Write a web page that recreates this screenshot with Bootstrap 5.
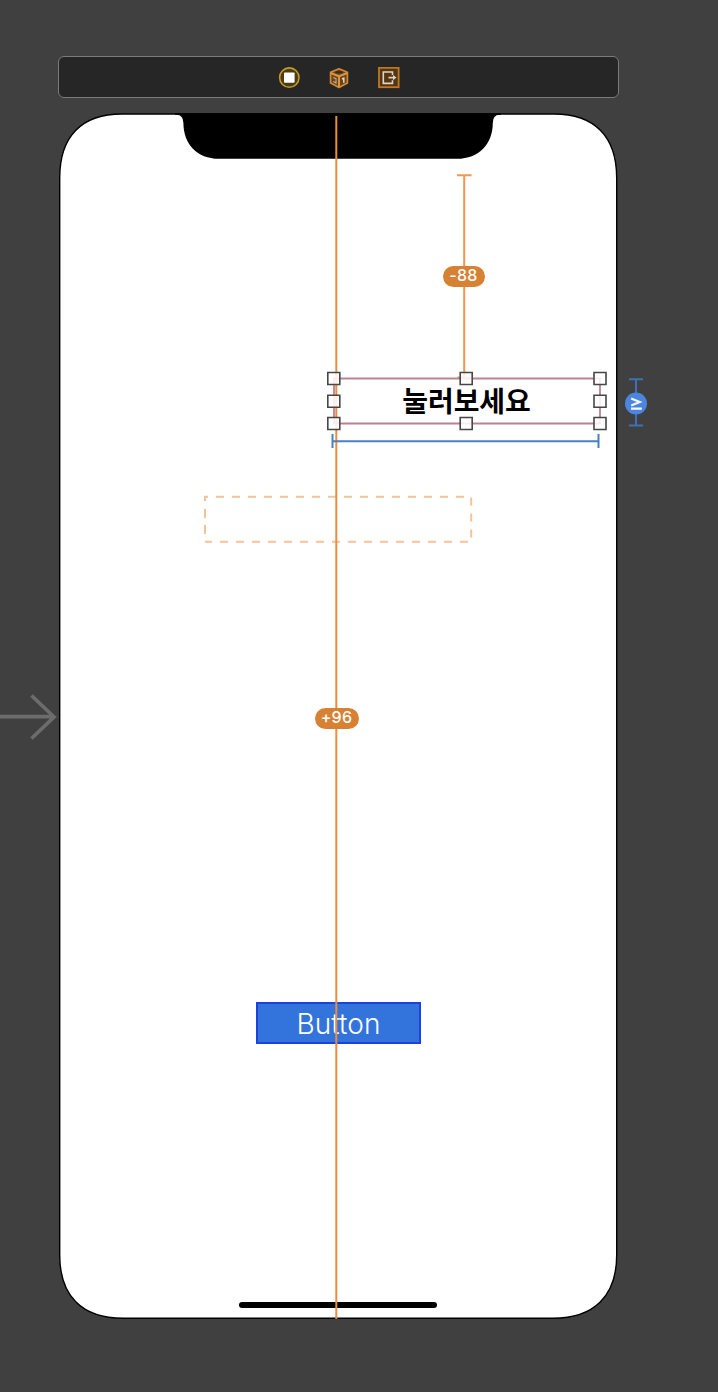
<!DOCTYPE html>
<html lang="ko">
<head>
<meta charset="utf-8">
<meta name="viewport" content="width=device-width, initial-scale=1">
<title>Storyboard</title>
<link href="https://cdn.jsdelivr.net/npm/bootstrap@5.3.0/dist/css/bootstrap.min.css" rel="stylesheet">
<style>
body{background:#404040;font-family:Inter,"Noto Sans CJK KR",sans-serif;height:1392px;overflow:hidden}
.storyboard{width:718px;height:1392px;padding:56px 100px 0 58px}
.scene-dock{height:42px;width:561px;padding-top:2px;background:#262626;border:1px solid #7b7b7b;border-radius:6px;gap:28px}
.phone{width:561px;height:1208px;margin-top:14px}
.screen{position:relative;height:100%}
.title-label{width:268px;height:46px;margin:265px 0 0 274.5px;font:600 28px/46px "Noto Sans CJK KR",sans-serif;color:#000;letter-spacing:-.1px}
.action-btn{width:165px;height:42px;margin:579px 0 0 198px;border:2px solid #1b42df;border-radius:0;background:#3374dc;color:#fff;font-size:28px;line-height:40px;font-weight:300;padding:0;letter-spacing:.05px}
.home-bar{width:198px;height:6.5px;margin:257.5px 0 0 181px;background:#000}
.constant{position:absolute;height:20.5px;background:#d68133;color:#fff;font-size:16px;line-height:18px;font-weight:500;letter-spacing:.3px}
.top-constant{left:443px;top:266px;width:42px;padding-right:1px}
.center-constant{left:315px;top:708px;width:44px;padding-right:1px}
</style>
</head>
<body>
<main class="storyboard position-relative">
  <header class="scene-dock d-flex justify-content-center align-items-center">
    <svg width="22" height="22" viewBox="0 0 22 22"><circle cx="11.3" cy="10.6" r="9.7" fill="#4b3d14" stroke="#c79a2b" stroke-width="1.6"/><rect x="6" y="5.4" width="10.6" height="10.4" rx=".8" fill="#fff"/></svg>
    <svg width="22" height="22" viewBox="0 0 22 22"><path d="M11 1.8 19.4 5.3V16L11 20.4 2.6 16V5.3Z" fill="#6b4319" stroke="#d08b37" stroke-width="1.7" stroke-linejoin="round"/><path d="M2.8 6 11 9.3 19.2 6M11 9.3V20" fill="none" stroke="#d99542" stroke-width="2"/><path d="M7.5 5.3h7" stroke="#3b2a18" stroke-width="2"/><path d="M5.2 10.5 8 11.7V16L5.2 14.4" fill="none" stroke="#c1aa91" stroke-width="1.2"/><path d="m14 12 1.8-.8v4.5" fill="none" stroke="#ead7bd" stroke-width="1.5"/></svg>
    <svg width="22" height="22" viewBox="0 0 22 22"><rect x="1" y=".8" width="19.6" height="19.4" fill="#543611" stroke="#bd7927" stroke-width="1.8"/><path d="M14.5 8V5H5.3v11.4h9.2V13.3" fill="none" stroke="#dfd4c6" stroke-width="1.6"/><path d="M10.5 10.6h6" stroke="#dfd4c6" stroke-width="1.7"/><path d="m15 8 3.5 2.6-3.5 2.6Z" fill="#dfd4c6"/></svg>
  </header>

  <section class="phone position-relative">
    <svg class="position-absolute top-0 start-0" width="561" height="1208" viewBox="58 112 561 1208">
      <path d="M122 114H554C594 114 616.7 136 616.7 178V1255C616.7 1296 594 1318.2 553 1318.2H123C82 1318.2 59.7 1296 59.7 1255V178C59.7 136 82 114 122 114Z" fill="#fff" stroke="#000" stroke-width="1.4"/>
      <path d="M175 113.3V114.8H176.5Q183.4 115 183.4 123C183.4 144 197 158.8 219 158.8H457C479 158.8 492.8 144 492.8 123Q492.8 115 499.5 114.8H501V113.3Z"/>
    </svg>
    <div class="screen d-flex flex-column align-items-start">
      <div class="title-label text-center flex-shrink-0">눌러보세요</div>
      <button class="btn action-btn flex-shrink-0" type="button">Button</button>
      <div class="home-bar rounded-pill flex-shrink-0"></div>
    </div>
  </section>

  <!-- Constraint guides and selection handles over the canvas -->
  <svg class="position-absolute top-0 start-0" width="718" height="1392" fill="none">
    <path d="M0 716.7H53M31.5 695.5 54 717 31.5 738.5" stroke="#6c6c6c" stroke-width="3.7"/>
    <g stroke="#f5c297" stroke-width="2">
      <path d="M205 501V496.7H208M216 496.7H465" stroke-dasharray="8 8"/>
      <path d="M205 509V535" stroke-dasharray="9 7"/>
      <path d="M471.2 497.5V538" stroke-dasharray="8 8"/>
      <path d="M205 541.7H212M220 541.7H469" stroke-dasharray="8 8"/>
    </g>
    <path d="M336.3 116V1319" stroke="#ed8b3f" stroke-width="2"/>
    <path d="M457 175.2H471.5M464.2 175V377.5M457.5 377.5H471" stroke="#f29650" stroke-width="2"/>
    <path d="M334 378.5H600V423.5H334Z" stroke="#bd8292" stroke-width="1.8"/>
    <g stroke="#4a80bf" stroke-width="2"><path d="M332.5 441.2H598.5M332.5 434V448M598.5 434V448"/><path d="M636 379.2V426M629 379.2H643M629 425.4H643" stroke="#3e70b3"/></g>
    <g fill="#fff" fill-opacity=".86" stroke="#464646" stroke-width="1.6">
      <path d="M327.8 372.5h12v12h-12zM460.2 372.5h12v12h-12zM594 372.5h12v12h-12zM327.8 395.3h12v12h-12zM594 395.3h12v12h-12zM327.8 417.5h12v12h-12zM460.2 417.5h12v12h-12zM594 417.5h12v12h-12z"/>
    </g>
    <circle cx="636" cy="403.5" r="11" fill="#4c85df"/>
    <path d="M631.2 398.5 639.8 402 631.2 405.5M631 408.6H641.8" stroke="#f4f7ff" stroke-width="2.1"/>
  </svg>
  <span class="constant top-constant rounded-pill text-center">-88</span>
  <span class="constant center-constant rounded-pill text-center">+96</span>
</main>
<script src="https://cdn.jsdelivr.net/npm/bootstrap@5.3.0/dist/js/bootstrap.bundle.min.js"></script>
</body>
</html>
